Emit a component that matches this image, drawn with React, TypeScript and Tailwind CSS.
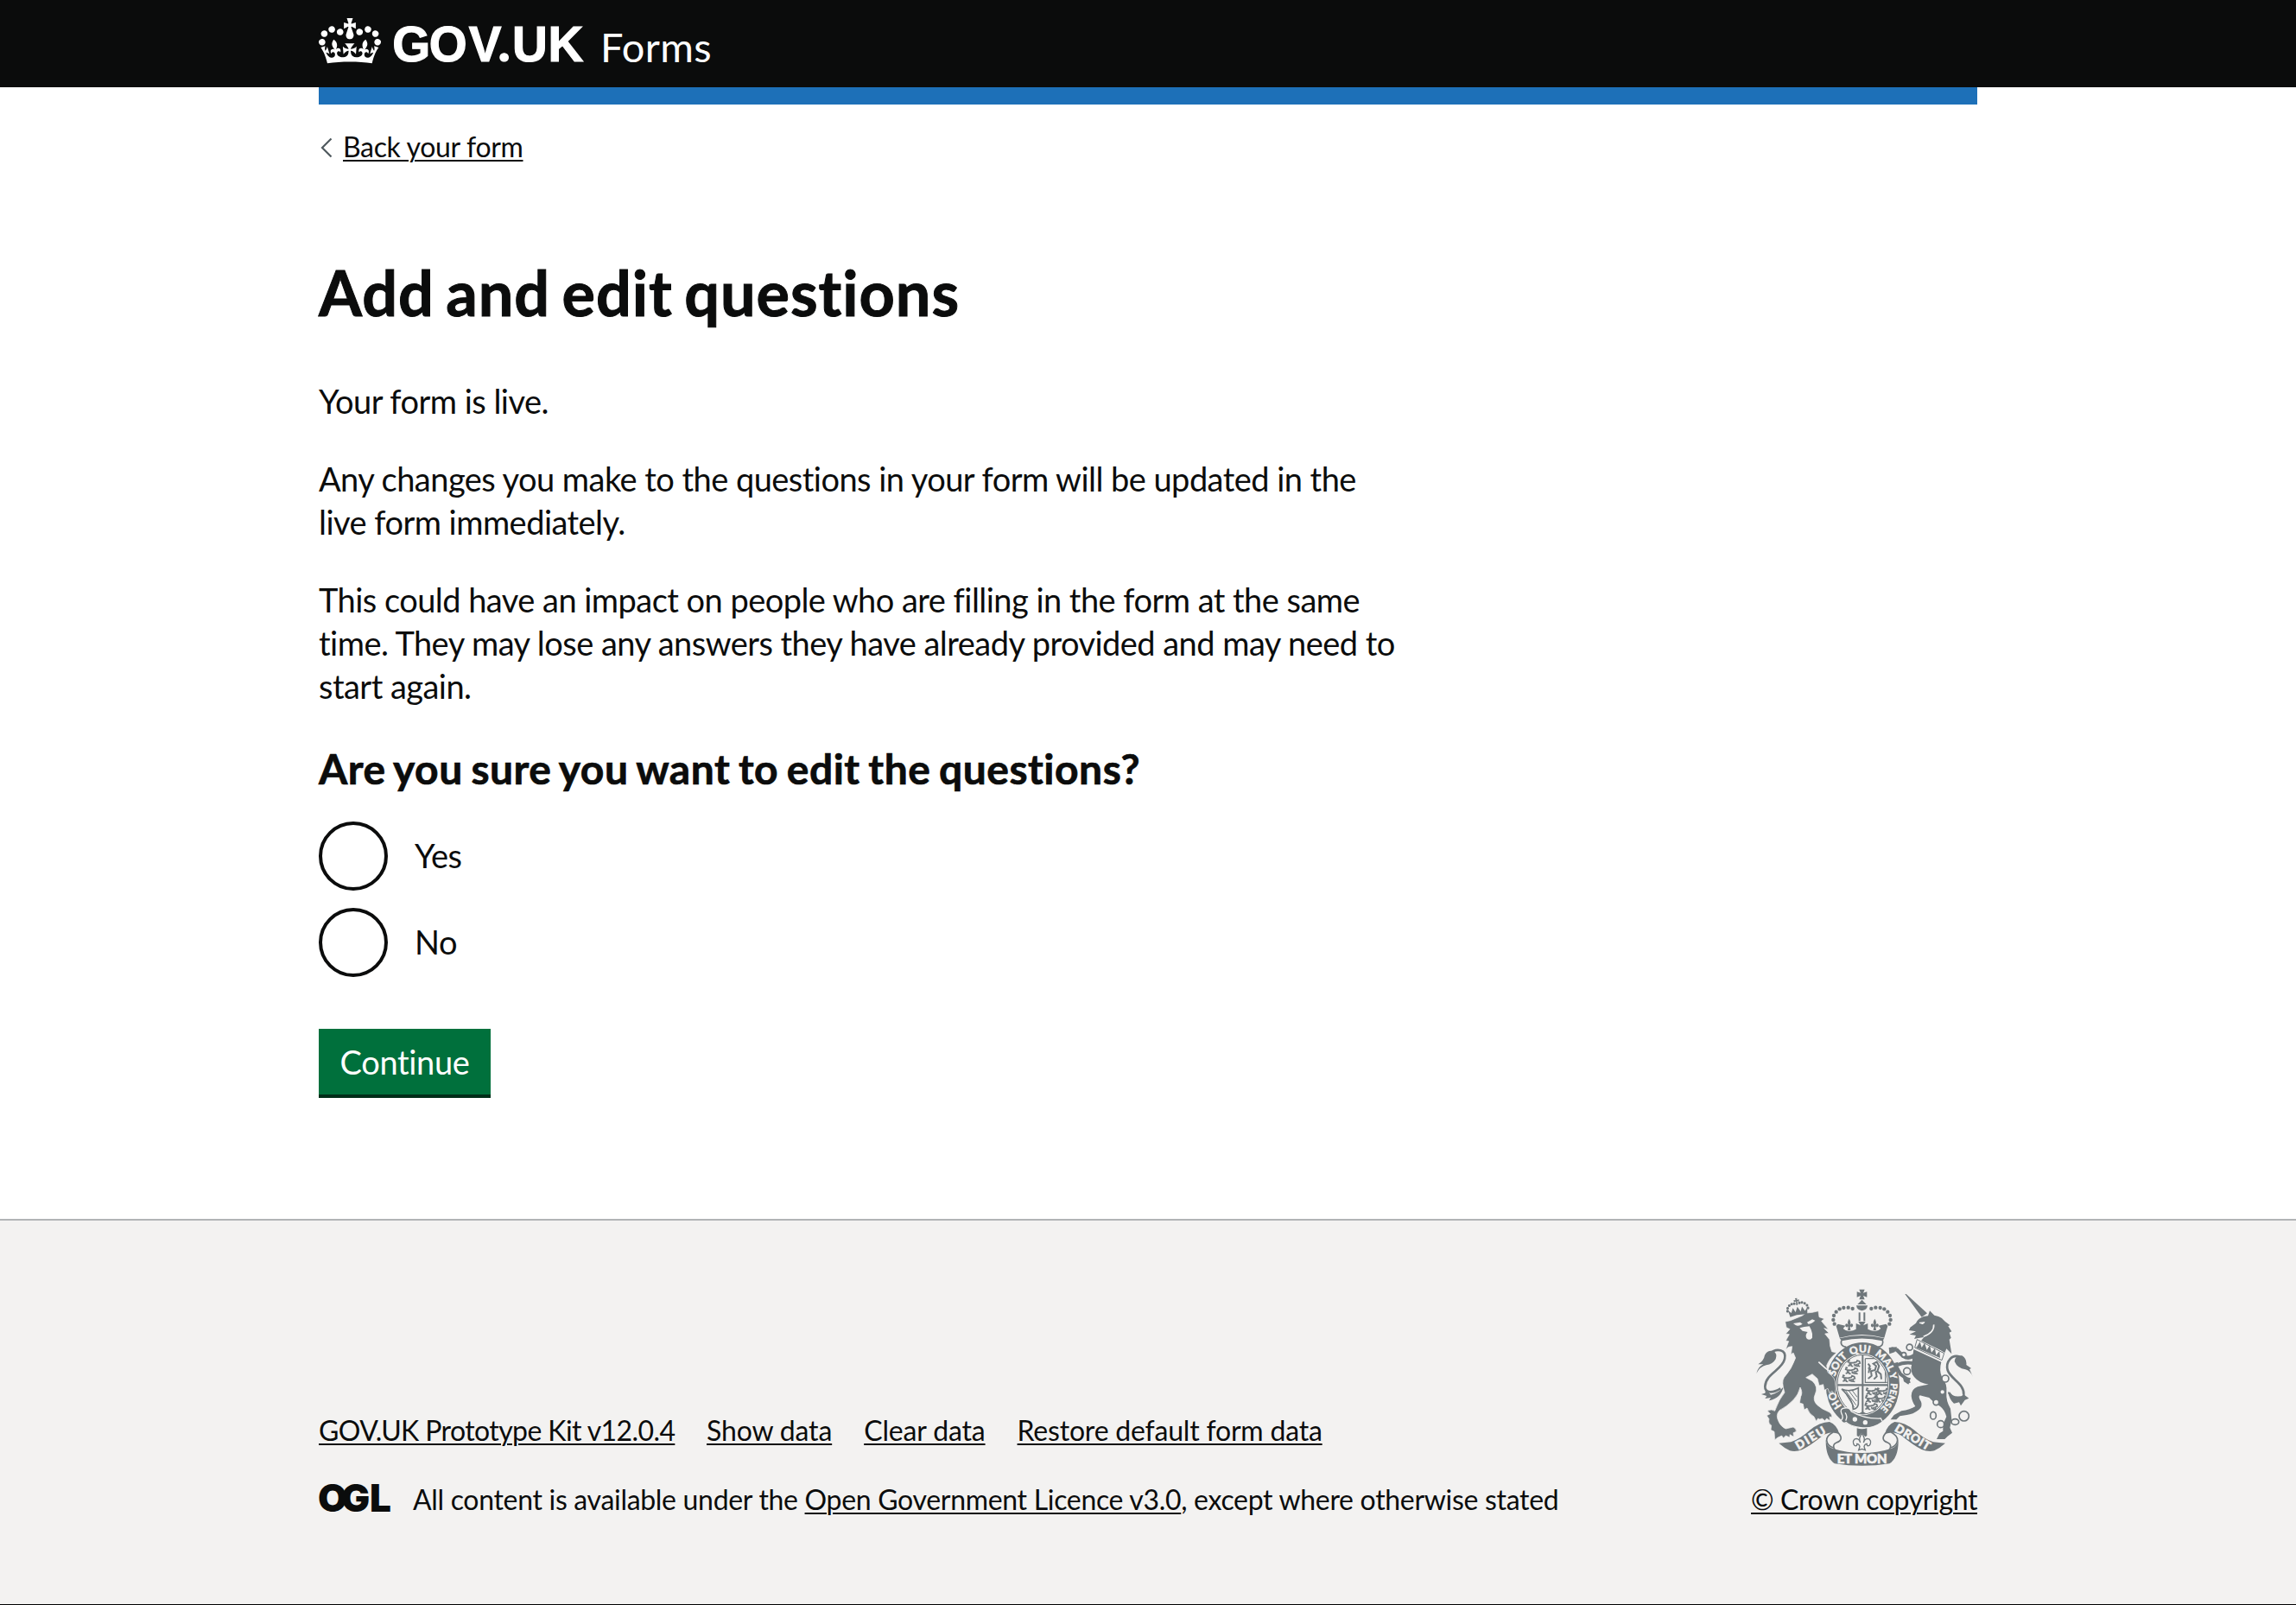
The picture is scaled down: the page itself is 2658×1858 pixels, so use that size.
import React from "react";

const INK = "#6f777b";
const PAPER = "#f3f2f1";

function Crown() {
  return (
    <path
      transform="translate(0 21) scale(0.5455)"
      d="M25 30.2c3.5 1.5 7.7-.2 9.1-3.7 1.5-3.6-.2-7.8-3.9-9.2-3.6-1.4-7.6.3-9.1 3.9-1.4 3.5.3 7.5 3.9 9zM9 39.5c3.6 1.5 7.8-.2 9.2-3.7 1.5-3.6-.2-7.8-3.9-9.1-3.6-1.5-7.6.2-9.1 3.8-1.4 3.5.3 7.5 3.8 9zM4.4 57.2c3.5 1.5 7.7-.2 9.1-3.8 1.5-3.6-.2-7.7-3.9-9.1-3.5-1.5-7.6.3-9.1 3.8-1.4 3.5.3 7.6 3.9 9.1zm38.3-21.4c3.5 1.5 7.7-.2 9.1-3.8 1.5-3.6-.2-7.7-3.9-9.1-3.6-1.5-7.6.3-9.1 3.8-1.3 3.6.4 7.7 3.9 9.1zm64.4-5.6c-3.6 1.5-7.8-.2-9.1-3.7-1.5-3.6.2-7.8 3.8-9.2 3.6-1.4 7.7.3 9.2 3.9 1.3 3.5-.4 7.5-3.9 9zm15.9 9.3c-3.6 1.5-7.7-.2-9.1-3.7-1.5-3.6.2-7.8 3.7-9.1 3.6-1.5 7.7.2 9.2 3.8 1.5 3.5-.3 7.5-3.8 9zm4.7 17.7c-3.6 1.5-7.8-.2-9.2-3.8-1.5-3.6.2-7.7 3.9-9.1 3.6-1.5 7.7.3 9.2 3.8 1.3 3.5-.4 7.6-3.9 9.1zM89.3 35.8c-3.6 1.5-7.8-.2-9.2-3.8-1.4-3.6.2-7.7 3.9-9.1 3.6-1.5 7.7.3 9.2 3.8 1.4 3.6-.3 7.7-3.9 9.1zM69.7 17.7l8.9 4.7V9.3l-8.9 2.8c-.2-.3-.5-.6-.9-.9L72.4 0H59.6l3.5 11.2c-.3.3-.6.5-.9.9l-8.8-2.8v13.1l8.8-4.7c.3.3.6.7.9.9l-5 15.4v.1c-.2.8-.4 1.6-.4 2.4 0 4.1 3.1 7.5 7 8.1h.2c.3 0 .7.1 1 .1.4 0 .7 0 1-.1h.2c4-.6 7.1-4.1 7.1-8.1 0-.8-.1-1.7-.4-2.4V34l-5.1-15.4c.4-.2.7-.6 1-.9zM66 92.8c16.9 0 32.8 1.1 47.1 3.2 4-16.9 8.9-26.7 14-33.5l-9.6-3.4c1 4.9 1.1 7.2 0 10.2-1.5-1.4-3-4.3-4.2-8.7L108.6 76c2.8-2 5-3.2 7.5-3.3-4.4 9.4-10 11.9-13.6 11.2-4.3-.8-6.3-4.6-5.6-7.9 1-4.7 5.7-5.9 8-.5 4.3-8.7-3-11.4-7.6-8.8 7.1-7.2 7.9-13.5 2.1-21.1-8 6.1-8.1 12.3-4.5 20.8-4.7-5.4-12.1-2.5-9.5 6.2 3.4-5.2 7.9-2 7.2 3.1-.6 4.3-6.4 7.8-13.5 7.2-10.3-.9-10.9-8-11.2-13.8 2.5-.5 7.1 1.8 11 7.3L80.2 60c-4.1 4.4-8 5.3-12.3 5.4 1.4-4.4 8-11.6 8-11.6H55.5s6.4 7.2 7.9 11.6c-4.2-.1-8-1-12.3-5.4l1.4 16.4c3.9-5.5 8.5-7.7 10.9-7.3-.3 5.8-.9 12.8-11.1 13.8-7.2.6-12.9-2.9-13.5-7.2-.7-5 3.8-8.3 7.1-3.1 2.7-8.7-4.6-11.6-9.4-6.2 3.7-8.5 3.6-14.7-4.6-20.8-5.8 7.6-5 13.9 2.2 21.1-4.7-2.6-11.9.1-7.7 8.8 2.3-5.5 7.1-4.2 8.1.5.7 3.3-1.3 7.1-5.7 7.9-3.5.7-9-1.8-13.5-11.2 2.5.1 4.7 1.3 7.5 3.3l-4.7-15.4c-1.2 4.4-2.7 7.2-4.3 8.7-1.1-3-.9-5.3 0-10.2l-9.5 3.4c5 6.9 9.9 16.7 14 33.5 14.8-2.1 30.8-3.2 47.7-3.2z"
    />
  );
}

function GovLogo() {
  return (
    <svg width="309" height="101" viewBox="0 0 309 101" fill="#fff" className="shrink-0">
      <Crown />
      <text
        y="71.2"
        fontSize="56.5"
        fontWeight="700"
        stroke="#fff"
        strokeWidth="1.2"
        className="font-['Liberation_Sans',sans-serif]"
      >
        <tspan x="85.2 127.8 173.8">GOV</tspan>
        <tspan x="207.8" fontWeight="900" fontSize="58" className="font-[Lato,sans-serif]">.</tspan>
        <tspan x="224 265.4">UK</tspan>
      </text>
    </svg>
  );
}

/* Passant lion used in the quarters of the shield */
function MiniLion({ x, y }: { x: number; y: number }) {
  return (
    <path
      transform={`translate(${x} ${y})`}
      d="M2 20 L8 18 L8 8 L20 9 L32 6 L34 1 L42 4 L44 10 L37 13 L38 20 L44 21 M32 12 L30 19 L36 21 M12 12 L14 20 L20 21 M24 12 L26 20 M8 8 L2 6 L4 -1 L9 1"
      fill="none"
      stroke={INK}
      strokeWidth="5"
    />
  );
}

function Fleur({ x, y }: { x: number; y: number }) {
  return (
    <path
      transform={`translate(${x} ${y})`}
      d="M0 -20 Q8 -8 3 2 Q8 -8 13 0 Q15 8 7 10 Q6 5 3 8 L5 20 L-5 20 L-3 8 Q-6 5 -7 10 Q-15 8 -13 0 Q-8 -8 -3 2 Q-8 -8 0 -20Z"
      fill={INK}
    />
  );
}

const crownPearls = [
  [339, 158], [335, 144], [337, 129], [345, 116], [357, 106], [371, 102], [387, 101], [402, 105],
];

const lionCrownPearls = [
  [176, 108], [178, 98], [185, 90], [194, 86], [203, 86], [221, 86], [230, 86], [239, 90], [246, 98], [248, 108],
];

function RibbonSide() {
  return (
    <path
      d="M146 572 L188 568 Q222 556 252 528 Q288 498 322 498 Q348 508 356 540 Q322 528 298 546 Q256 580 228 594 Q204 604 184 598 Q164 588 146 572Z"
      fill={INK}
    />
  );
}

function RibbonCurl() {
  return (
    <path
      d="M352 536 Q374 560 346 570 Q328 578 342 598 M334 534 Q312 546 312 562 Q314 582 336 588"
      fill="none"
      stroke={INK}
      strokeWidth="5"
    />
  );
}

function CoatOfArms() {
  return (
    <svg width="251" height="206" viewBox="67 36 753 618" className="shrink-0">
      <defs>
        <path id="motto" d="M437 477 A98 110 0 0 1 437 257 A98 110 0 0 1 437 477" />
        <clipPath id="shield">
          <ellipse cx="437" cy="368" rx="88" ry="103" />
        </clipPath>
      </defs>

      {/* Imperial crown */}
      <g fill={INK}>
        <path d="M425 38 H444 L439 50 L452 46 V65 L439 60 L444 73 H425 L430 60 L417 65 V46 L430 50Z" />
        <path d="M434.5 74 L450 90 H419Z" />
        <path d="M415 94 H454 Q452 110 434.5 112 Q417 110 415 94Z" />
        {crownPearls.map(([x, y]) => (
          <g key={`${x}-${y}`}>
            <circle cx={x} cy={y} r="6.5" />
            <circle cx={869 - x} cy={y} r="6.5" />
          </g>
        ))}
        <rect x="423" y="118" width="6" height="30" />
        <rect x="440" y="118" width="6" height="30" />
        <path d="M422 150 H447 L439 163 L455 156 V176 Q470 184 479 182 Q490 184 500 174 L492 164 L518 158 L524 165 L512 206 Q434 184 357 206 L345 165 L351 158 L377 164 L369 174 Q380 184 390 182 Q400 184 414 176 V156 L430 163Z" />
        <path d="M357 208 Q434 188 512 208 L508 214 Q434 198 362 214Z" />
      </g>
      <Fleur x={390} y={160} />
      <Fleur x={479} y={160} />
      <path d="M364 214 Q434 198 506 214 Q512 234 490 238 M364 214 Q356 234 380 238" fill="none" stroke={INK} strokeWidth="5" />

      {/* Lion's tail */}
      <path d="M112 262 C138 240 174 246 166 280 C158 318 100 330 98 375 C97 400 126 398 152 382" fill="none" stroke={INK} strokeWidth="8" />
      <path d="M68 330 Q74 306 92 298 L74 298 Q94 285 97 266 Q106 248 126 252 Q142 260 135 280 Q125 298 102 301 Q80 306 68 330Z" fill={INK} />
      <path d="M85 402 L98 398 L102 384 L118 404 Q146 398 162 376 Q154 416 112 424 L118 414 L98 417 L104 408Z" fill={INK} />

      {/* Unicorn's tail */}
      <path d="M775 272 C745 262 725 290 732 318 C742 350 792 365 788 405 C784 430 752 420 736 396" fill="none" stroke={INK} strokeWidth="8" />
      <path d="M820 342 Q810 320 794 316 Q766 312 756 288 Q758 265 782 268 Q800 280 797 300 L814 312 L808 315Z" fill={INK} />
      <path d="M733 392 Q758 420 790 404 L806 416 L792 422 L778 442 L772 430 L754 434 Q738 420 733 392Z" fill={INK} />

      {/* Garter */}
      <ellipse cx="437" cy="370" rx="128" ry="148" fill={INK} />
      <ellipse cx="437" cy="368" rx="92" ry="107" fill={PAPER} />
      <g fill={PAPER} stroke={PAPER} strokeWidth="1.2" fontSize="36" fontWeight="900" className="font-[Lato,sans-serif]">
        <text><textPath href="#motto" startOffset="12.5%">HO</textPath></text>
        <text><textPath href="#motto" startOffset="29%">SOIT</textPath></text>
        <text><textPath href="#motto" startOffset="43.5%">QUI</textPath></text>
        <text><textPath href="#motto" startOffset="56.5%">MAL</textPath></text>
        <text><textPath href="#motto" startOffset="69.3%" fontSize="32">Y</textPath></text>
        <text><textPath href="#motto" startOffset="74.5%" fontSize="32">PENSE</textPath></text>
      </g>

      {/* Quartered shield */}
      <ellipse cx="437" cy="368" rx="88" ry="103" fill="none" stroke={INK} strokeWidth="3" />
      <g clipPath="url(#shield)">
        <path d="M437 262 V474" stroke={INK} strokeWidth="6" />
        <path d="M345 370 H530" stroke={INK} strokeWidth="7" />
        <MiniLion x={384} y={284} />
        <MiniLion x={376} y={310} />
        <MiniLion x={366} y={337} />
        <MiniLion x={448} y={382} />
        <MiniLion x={446} y={408} />
        <MiniLion x={444} y={434} />
        <MiniLion x={486} y={382} />
        <MiniLion x={480} y={408} />
        <path d="M446 278 V361 H522 M446 278 H500 M516 300 V361" fill="none" stroke={INK} strokeWidth="3.5" />
        <path d="M456 348 L468 338 L466 322 L480 318 L484 304 L474 296 L486 290 L494 304 L488 322 L500 332 L502 350 M482 322 L486 340 L476 350 M466 316 L456 310 M456 296 L462 304 L458 328" fill="none" stroke={INK} strokeWidth="6" />
        <path d="M364 384 Q392 396 422 380 V436 Q420 452 404 454 Q404 420 364 384Z" fill="none" stroke={INK} strokeWidth="5" />
        <path d="M378 390 L414 440 M389 390 L416 426 M400 388 L418 412 M372 390 L408 448" stroke={INK} strokeWidth="3" />
      </g>
      <path d="M422 470 H452 L437 462Z" fill={INK} />

      {/* Buckle and strap */}
      <path d="M364 470 Q356 452 374 450 Q392 446 398 462 Q440 488 500 486 L506 498 Q470 524 430 518 Q392 512 380 500 Q368 506 362 494 Q372 482 364 470Z" fill={INK} stroke={PAPER} strokeWidth="4" />
      <circle cx="410" cy="489" r="8" fill={PAPER} />
      <circle cx="446" cy="500" r="8" fill={PAPER} />
      <path d="M376 466 Q386 478 378 494" fill="none" stroke={PAPER} strokeWidth="4" />

      {/* Lion */}
      <path
        d="M168 150 L186 146 L226 130 L240 120 L262 118 L283 113 L286 134 L304 140 L294 148 L302 158 L318 176 L303 173 L320 190 L306 192 L322 212 Q322 236 330 254 L346 258 Q322 276 312 302 L316 326 Q344 346 342 366 L344 384 L340 402 L330 390 L322 398 L316 382 L304 388 L300 368 L286 372 L280 348 L262 332 L240 344 L262 356 Q284 376 272 402 Q262 424 280 440 Q296 454 312 460 Q332 468 330 482 L322 480 L324 494 L312 486 L306 494 L296 486 Q288 492 282 486 L276 496 L268 480 Q250 470 244 450 L234 456 L230 436 L218 432 L222 410 Q230 396 220 378 Q214 404 196 422 Q172 446 148 458 Q134 474 144 494 Q152 514 170 522 L196 516 Q208 522 206 532 L196 536 L198 550 L184 542 L184 552 L170 546 L162 554 L156 546 Q140 552 132 560 L130 532 L118 526 L120 510 Q108 504 112 488 L104 476 L116 470 L106 460 Q120 452 132 460 Q146 420 166 396 Q154 360 164 344 Q190 316 204 276 L196 258 L188 264 L192 236 L180 238 L170 246 L180 218 L170 216 L182 194 L170 192 L184 176 L172 170Z"
        fill={INK}
        stroke={PAPER}
        strokeWidth="2"
      />
      <path d="M284 290 Q306 312 334 332" fill="none" stroke={PAPER} strokeWidth="5" />
      <path d="M196 156 L220 152 L228 158 Q214 168 204 162Z M244 152 L262 142 L272 146 Q260 158 248 158Z M218 172 L234 168 L252 166 L258 178 Q264 192 262 206 Q252 218 242 208 Q236 196 246 186 L228 182Z" fill={PAPER} />
      <g transform="rotate(-9 212 110)" fill={INK}>
        {lionCrownPearls.map(([x, y]) => (
          <circle key={x} cx={x} cy={y} r="4.6" />
        ))}
        <path d="M208 68 H216 L214 75 L221 73 V81 L214 79 L215 92 H209 L210 79 L203 81 V73 L210 75Z" />
        <path d="M178 106 L188 116 L196 100 L203 116 L212 98 L221 116 L228 100 L236 116 L246 106 L242 130 Q212 122 182 130Z" />
      </g>

      {/* Unicorn */}
      <path d="M584 54 L588 54 L661 121 L642 134Z" fill={INK} />
      <path
        d="M598 180 L602 170 L622 155 Q632 132 664 130 L670 112 L686 128 Q712 132 724 150 L740 162 L734 166 L746 184 L738 188 L744 206 L738 212 L746 262 L728 244 L722 258 L706 248 L640 216 L650 204 L626 208 L616 210 L622 198 L600 194 L622 184 Z"
        fill={INK}
      />
      <path d="M684 160 Q686 188 648 202" fill="none" stroke={PAPER} strokeWidth="5" />
      <path d="M634 154 L652 152 L646 158Z" fill={PAPER} stroke={PAPER} strokeWidth="3" />
      <path d="M626 212 L720 260 L712 284 L618 240Z" fill={PAPER} stroke={INK} strokeWidth="3" />
      <path d="M626 236 L636 220 L642 240 L652 224 L660 248 L670 232 L676 257 L688 242 L692 266 L704 252 L706 276 L622 240Z" fill={INK} />
      <path
        d="M614 246 L710 290 Q702 318 712 342 Q732 366 728 398 Q726 424 742 452 L746 490 L740 518 L748 536 L732 548 L722 558 L694 558 L704 538 L716 530 L716 506 L728 480 Q722 456 706 444 Q680 428 668 414 Q648 410 636 406 Q628 410 640 428 Q646 444 632 456 Q612 472 590 474 L566 478 L554 490 L534 490 L546 474 L572 460 Q602 456 620 444 Q608 428 606 408 Q606 384 628 376 Q650 370 666 368 Q634 364 616 342 Q600 322 608 296 Z"
        fill={INK}
      />
      <path d="M622 262 Q600 284 578 270 L556 248 L536 244" fill="none" stroke={INK} strokeWidth="13" />
      <path d="M612 294 Q584 288 552 302 L568 332 L592 350 L598 364" fill="none" stroke={INK} strokeWidth="12" />
      <path d="M528 240 L556 238 L548 256 L530 262Z M576 340 L604 346 L596 368 L580 358Z M538 296 L560 290 L552 312Z" fill={INK} />
      <g fill={PAPER} stroke={INK} strokeWidth="5">
        <circle cx="600" cy="239" r="10.5" />
        <circle cx="580" cy="265" r="8" />
        <circle cx="591" cy="322" r="12" />
        <circle cx="724" cy="348" r="12" />
        <circle cx="714" cy="394" r="9" />
        <circle cx="692" cy="430" r="10" />
        <ellipse cx="682" cy="476" rx="10" ry="13" />
        <circle cx="708" cy="506" r="12" />
        <ellipse cx="758" cy="498" rx="13" ry="10" />
        <circle cx="789" cy="478" r="17" />
      </g>

      {/* Ribbon */}
      <RibbonSide />
      <RibbonCurl />
      <g transform="matrix(-1 0 0 1 870 0)">
        <RibbonSide />
        <RibbonCurl />
      </g>
      <path d="M309 560 Q312 584 332 590 Q435 622 538 590 Q558 584 561 560 Q562 622 530 643 Q435 658 340 643 Q308 622 309 560Z" fill={INK} />
      <g fill={PAPER} stroke={PAPER} strokeWidth="1.8" fontWeight="900" textAnchor="middle" className="font-[Lato,sans-serif]">
        <text x="0" y="0" fontSize="41" textLength="114" transform="translate(263 566) rotate(-31)">DIEU</text>
        <text x="0" y="0" fontSize="41" textLength="136" transform="translate(604 563) rotate(31)">DROIT</text>
        <text x="435" y="641" fontSize="45" textLength="174">ET MON</text>
      </g>

      {/* Fleur-de-lis badge */}
      <path d="M417 520 Q434 526 452 520 V546 L446 550 L434 536 L423 550 L417 546Z" fill={INK} />
      <path d="M434.5 538 Q448 556 440 570 Q446 552 460 558 Q470 568 460 580 Q450 584 452 574 Q444 574 442 584 L446 596 L434.5 592 L423 596 L427 584 Q425 574 417 574 Q419 584 409 580 Q399 568 409 558 Q423 552 429 570 Q421 556 434.5 538Z" fill={PAPER} stroke={INK} strokeWidth="4" />
    </svg>
  );
}

function OglMark() {
  return (
    <svg width="82" height="36" viewBox="0 0 82 36" fill="#0b0c0c" className="shrink-0 overflow-visible">
      <text y="33.5" fontSize="44" fontWeight="900" x="-1 26 59" className="font-[Inter,sans-serif]">
        OGL
      </text>
    </svg>
  );
}

const linkClass = "underline decoration-2 underline-offset-[3px]";

function Radio({ label }: { label: string }) {
  return (
    <label className="flex h-20 items-center">
      <span className="size-20 rounded-full border-4 border-[#0b0c0c]" />
      <span className="-mt-0.5 ml-[31px] text-[38px] leading-[50px] tracking-[-0.5px]">{label}</span>
    </label>
  );
}

export default function App() {
  return (
    <div className="flex h-[1858px] w-full flex-col overflow-hidden bg-white font-[Lato,sans-serif] text-[#0b0c0c]">
      <header className="h-[101px] shrink-0 bg-[#0b0c0c]">
        <div className="mx-auto flex w-[1920px]">
          <GovLogo />
          <span className="ml-[17px] pt-[24px] text-[47px] leading-[60px] tracking-[0.3px] text-white">Forms</span>
        </div>
      </header>
      <div className="mx-auto h-5 w-[1920px] shrink-0 bg-[#1d70b8]" />

      <div className="mx-auto flex w-[1920px] grow flex-col items-start pt-[29px]">
        <a className="flex items-center text-[32px] leading-10 tracking-[-0.34px]">
          <svg width="28" height="40" viewBox="0 0 28 40" fill="none" stroke="#505a5f" strokeWidth="2.2">
            <path d="M14.5 10.5 L4 21 L14.5 31.5" />
          </svg>
          <span className={linkClass}>Back your form</span>
        </a>

        <main className="pt-[108px]">
          <h1 className="mb-[61px] text-[72px] leading-[80px] font-bold tracking-[0.95px] [word-spacing:-5px] [-webkit-text-stroke:1px_#0b0c0c]">
            Add and edit questions
          </h1>
          <div className="flex flex-col gap-10 text-[38px] leading-[50px] tracking-[-0.54px]">
            <p>Your form is live.</p>
            <p>
              Any changes you make to the questions in your form will be updated in the
              <br />
              live form immediately.
            </p>
            <p>
              This could have an impact on people who are filling in the form at the same
              <br />
              time. They may lose any answers they have already provided and may need to
              <br />
              start again.
            </p>
          </div>
          <h2 className="mt-[41px] text-[48px] leading-[60px] font-bold tracking-[0.49px] [word-spacing:-2.5px] [-webkit-text-stroke:0.7px_#0b0c0c]">
            Are you sure you want to edit the questions?
          </h2>
          <div className="mt-[31px] flex flex-col gap-5">
            <Radio label="Yes" />
            <Radio label="No" />
          </div>
          <button className="mt-[60px] flex h-[76px] w-[199px] items-center justify-center bg-[#00703c] pb-px text-[38px] leading-[38px] tracking-[-0.35px] text-white shadow-[0_4px_0_#002d18]">
            Continue
          </button>
        </main>
      </div>

      <footer className="h-[447px] shrink-0 border-t-2 border-b border-t-[#b1b4b6] border-b-black bg-[#f3f2f1] text-[32px] leading-10">
        <div className="mx-auto flex h-[343px] w-[1920px] items-end justify-between">
          <div>
            <div className="flex gap-[37px]">
              <a className={`${linkClass} w-[412px] tracking-[-0.6px] whitespace-nowrap`}>GOV.UK Prototype Kit v12.0.4</a>
              <a className={`${linkClass} tracking-[-0.15px]`}>Show data</a>
              <a className={`${linkClass} tracking-[-0.15px]`}>Clear data</a>
              <a className={`${linkClass} tracking-[-0.2px]`}>Restore default form data</a>
            </div>
            <div className="mt-10 flex">
              <OglMark />
              <p className="ml-[27px] tracking-[-0.31px]">
                All content is available under the <a className={linkClass}>Open Government Licence v3.0</a>, except
                where otherwise stated
              </p>
            </div>
          </div>
          <div className="flex flex-col items-end">
            <div className="mr-[5px] mb-[18px]">
              <CoatOfArms />
            </div>
            <a className={`${linkClass} tracking-[-0.38px]`}>© Crown copyright</a>
          </div>
        </div>
      </footer>
    </div>
  );
}
